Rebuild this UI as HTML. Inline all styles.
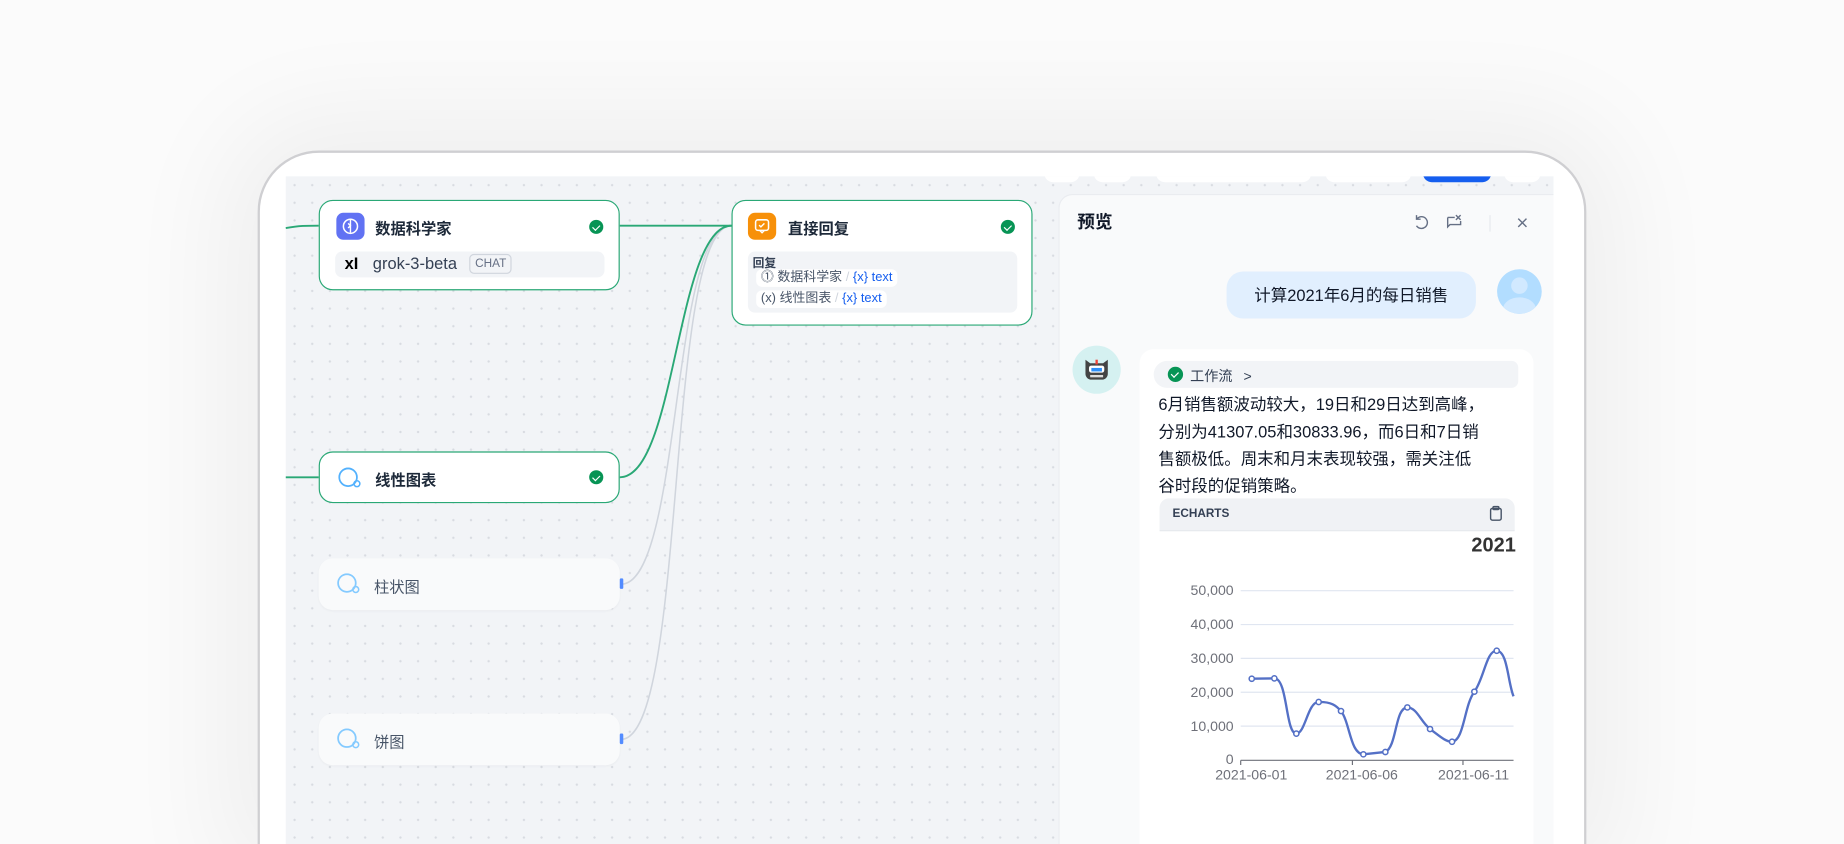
<!DOCTYPE html>
<html><head><meta charset="utf-8"><style>
html,body{margin:0;padding:0;width:1844px;height:844px;overflow:hidden;background:#fbfbfb;}
#s{position:absolute;left:0;top:0;width:1568px;height:718px;overflow:hidden;transform:scale(1.17602,1.1755);transform-origin:0 0;font-family:"Liberation Sans","Noto Sans CJK SC",sans-serif;color:#101828;}
.a{position:absolute;}
.dev{left:219px;top:128px;width:1130px;height:590px;border:2px solid #cfcfd2;border-bottom:none;border-radius:52px 52px 0 0;background:#fff;box-shadow:0 0 90px 30px rgba(0,0,0,0.05);box-sizing:border-box}
.scr{left:243px;top:150px;width:1078px;height:568px;background-color:#f2f4f7;background-image:radial-gradient(circle,#d8dbe1 0.8px,transparent 1.2px);background-size:15px 15px;overflow:hidden;}
.node{position:absolute;background:#fff;border:1.5px solid #2aa876;border-radius:12px;box-sizing:border-box;}
.ttl{position:absolute;font-size:13px;font-weight:bold;color:#1d2939;}
.chk{position:absolute;width:12px;height:12px;border-radius:50%;background:#079455;}
.chk:after{content:"";position:absolute;left:3.5px;top:2.5px;width:3px;height:5px;border:solid #fff;border-width:0 1.5px 1.5px 0;transform:rotate(45deg);}
.ico{position:absolute;width:24px;height:23px;border-radius:6px;}
.pill{position:absolute;background:#fff;border-radius:5px;font-size:11px;color:#475467;height:15px;line-height:15px;padding:0 4px;white-space:nowrap}
.pill b{font-weight:normal;color:#155eef}
.pale{position:absolute;background:#f9fafb;border-radius:12px;box-shadow:0 1px 2px rgba(16,24,40,0.03);}
</style></head><body><div id="s">
<div class="a dev"></div>
<div class="a scr">
 <div class="a" style="left:645px;top:-10px;width:30px;height:15px;background:#fff;border-radius:8px"></div>
 <div class="a" style="left:687px;top:-10px;width:32px;height:15px;background:#fff;border-radius:8px"></div>
 <div class="a" style="left:740px;top:-10px;width:132px;height:15px;background:#fff;border-radius:8px"></div>
 <div class="a" style="left:884px;top:-10px;width:73px;height:15px;background:#fff;border-radius:8px"></div>
 <div class="a" style="left:967px;top:-10px;width:58px;height:15px;background:#155eef;border-radius:8px"></div>
 <div class="a" style="left:1036px;top:-10px;width:31px;height:15px;background:#fff;border-radius:8px"></div>
</div>
<svg class="a" style="left:0;top:0" width="1568" height="718">
 <g fill="none" stroke-width="1.6">
  <path d="M243 194 C255 192 260 192 271 192" stroke="#2aa876"/>
  <path d="M527 192 L622 192" stroke="#2aa876"/>
  <path d="M243 406 L271 406" stroke="#2aa876"/>
  <path d="M528 497 C580 497 570 192 622 192" stroke="#d0d5dd" stroke-width="1.3"/>
  <path d="M528 629 C585 629 565 192 622 192" stroke="#d0d5dd" stroke-width="1.3"/>
  <path d="M527 406 C575 406 575 192 622 192" stroke="#2aa876"/>
 </g>
</svg>
<div class="node" style="left:271px;top:170px;width:256px;height:77px">
 <div class="ico" style="left:14px;top:10px;background:#6172f3"><svg width="24" height="23"><circle cx="12" cy="11.5" r="6" fill="none" stroke="#fff" stroke-width="1.3"/><path d="M12 6v11M10 9l2 2-2 2" stroke="#fff" stroke-width="1.2" fill="none"/></svg></div>
 <div class="ttl" style="left:47px;top:13px">数据科学家</div>
 <div class="chk" style="left:229px;top:16px"></div>
 <div class="a" style="left:13px;top:43px;width:229px;height:22px;background:#f2f4f7;border-radius:6px">
  <div class="a" style="left:8px;top:2px;font-size:14px;font-weight:bold;color:#000">x<span style="font-weight:bold">I</span></div>
  <div class="a" style="left:32px;top:2px;font-size:14px;color:#344054">grok-3-beta</div>
  <div class="a" style="left:114px;top:2px;height:15px;line-height:15px;padding:0 4px;border:1px solid #d0d5dd;border-radius:4px;font-size:10px;color:#667085">CHAT</div>
 </div>
</div>
<div class="node" style="left:622px;top:170px;width:256px;height:107px">
 <div class="ico" style="left:13px;top:10px;background:#f79009"><svg width="24" height="23"><rect x="6.5" y="6" width="11" height="9" rx="2" fill="none" stroke="#fff" stroke-width="1.3"/><path d="M10 15l2 2 2-2" stroke="#fff" fill="none" stroke-width="1.2"/><path d="M9.5 10.5l1.5 1.5 3-3" stroke="#fff" fill="none" stroke-width="1.2"/></svg></div>
 <div class="ttl" style="left:47px;top:13px">直接回复</div>
 <div class="chk" style="left:228px;top:16px"></div>
 <div class="a" style="left:13px;top:43px;width:229px;height:52px;background:#f2f4f7;border-radius:6px">
  <div class="a" style="left:4px;top:1px;font-size:10px;font-weight:bold;color:#344054">回复</div>
  <div class="pill" style="left:7px;top:15px">⓵ 数据科学家 <span style="color:#d0d5dd">/</span> <b>{x} text</b></div>
  <div class="pill" style="left:7px;top:33px">(x) 线性图表 <span style="color:#d0d5dd">/</span> <b>{x} text</b></div>
 </div>
</div>
<div class="node" style="left:271px;top:384px;width:256px;height:44px">
 <svg class="a" style="left:14px;top:11px" width="24" height="22"><circle cx="10" cy="10" r="7.5" fill="none" stroke="#53b1fd" stroke-width="1.5"/><circle cx="17.5" cy="15.5" r="2.5" fill="none" stroke="#53b1fd" stroke-width="1.3"/></svg>
 <div class="ttl" style="left:47px;top:13px">线性图表</div>
 <div class="chk" style="left:229px;top:15px"></div>
</div>
<div class="pale" style="left:271px;top:475px;width:256px;height:44px">
 <svg class="a" style="left:14px;top:11px" width="24" height="22"><circle cx="10" cy="10" r="7.5" fill="none" stroke="#84caff" stroke-width="1.5"/><circle cx="17.5" cy="15.5" r="2.5" fill="none" stroke="#84caff" stroke-width="1.3"/></svg>
 <div class="a" style="left:47px;top:14px;font-size:13px;color:#475467">柱状图</div>
</div>
<div class="a" style="left:527px;top:492px;width:3px;height:9px;background:#528bff;border-radius:1px"></div>
<div class="pale" style="left:271px;top:607px;width:256px;height:44px">
 <svg class="a" style="left:14px;top:11px" width="24" height="22"><circle cx="10" cy="10" r="7.5" fill="none" stroke="#84caff" stroke-width="1.5"/><circle cx="17.5" cy="15.5" r="2.5" fill="none" stroke="#84caff" stroke-width="1.3"/></svg>
 <div class="a" style="left:47px;top:14px;font-size:13px;color:#475467">饼图</div>
</div>
<div class="a" style="left:527px;top:624px;width:3px;height:9px;background:#528bff;border-radius:1px"></div>

<div class="a" style="left:900px;top:165px;width:421px;height:553px;background:#f9fafb;border-left:1px solid #eaecf0;border-top:1px solid #eaecf0;border-radius:12px 0 0 0;box-sizing:border-box;overflow:hidden">
 <div class="a" style="left:15px;top:12px;font-size:15px;font-weight:bold;color:#101828">预览</div>
 <svg class="a" style="left:300px;top:15px" width="100" height="18" fill="none" stroke="#667085" stroke-width="1.2">
  <path d="M4 5a5 5 0 1 1 -0.5 6"/><path d="M3.5 2v3.5h3.5"/>
  <path d="M30 4h6M30 4v8l2-2h9v-3"/><path d="M37 2l4 4M41 2l-4 4"/>
  <path d="M66 2v14" stroke="#eaecf0"/>
  <path d="M90 5l7 7M97 5l-7 7"/>
 </svg>
 <div class="a" style="left:142px;top:65px;width:212px;height:40px;background:#e1effe;border-radius:14px;font-size:14px;line-height:40px;text-align:center;color:#101828">计算2021年6月的每日销售</div>
 <div class="a" style="left:372px;top:63px;width:38px;height:38px;border-radius:50%;background:#b2ddff;overflow:hidden">
  <div class="a" style="left:12px;top:7px;width:14px;height:14px;border-radius:50%;background:#d1e9ff"></div>
  <div class="a" style="left:5px;top:24px;width:28px;height:20px;border-radius:50%;background:#d1e9ff"></div>
 </div>
 <div class="a" style="left:11px;top:128px;width:41px;height:41px;border-radius:50%;background:#d5f1f1">
  <svg class="a" style="left:8px;top:8px" width="25" height="25"><path d="M3 4l4 3h11l4-3v12a5 5 0 0 1-5 5H8a5 5 0 0 1-5-5z" fill="#444"/><rect x="6" y="9" width="13" height="6" rx="2" fill="#fff"/><rect x="8" y="11" width="9" height="3" fill="#2e90fa"/><rect x="11.5" y="4" width="2" height="4" fill="#f04438"/><rect x="7" y="17" width="11" height="2" fill="#ddd"/></svg>
 </div>
 <div class="a" style="left:68px;top:131px;width:335px;height:422px;background:#fff;border-radius:12px 12px 0 0">
  <div class="a" style="left:12px;top:10px;width:310px;height:23px;background:#f2f4f7;border-radius:12px 6px 6px 12px">
   <div class="chk" style="left:12px;top:5px;width:13px;height:13px"></div>
   <div class="a" style="left:31px;top:4px;font-size:12px;color:#344054">工作流 <span style="margin-left:6px">&gt;</span></div>
  </div>
  <div class="a" style="left:16px;top:36px;width:310px;font-size:14px;line-height:23px;color:#101828">6月销售额波动较大，19日和29日达到高峰，<br>分别为41307.05和30833.96，而6日和7日销<br>售额极低。周末和月末表现较强，需关注低<br>谷时段的促销策略。</div>
  <div class="a" style="left:17px;top:127px;width:302px;height:27px;background:#f0f2f5;border-radius:8px 8px 0 0;border-bottom:1px solid #e4e7ec">
   <div class="a" style="left:11px;top:8px;font-size:10px;font-weight:bold;color:#344054">ECHARTS</div>
   <svg class="a" style="left:280px;top:6px" width="12" height="14" fill="none" stroke="#475467" stroke-width="1.2"><rect x="1.5" y="2.5" width="9" height="10" rx="1.5"/><rect x="3.5" y="1" width="5" height="2.5" rx="0.8"/></svg>
  </div>
 </div>
</div>
<svg class="a" style="left:0;top:0" width="1568" height="718" font-family="Liberation Sans, sans-serif">
 <text x="1289" y="469" text-anchor="end" font-size="17" font-weight="bold" fill="#333">2021</text>
 <g stroke="#e0e6f1" stroke-width="1">
  <path d="M1055 502.5H1287M1055 531.3H1287M1055 560.1H1287M1055 588.9H1287M1055 617.7H1287"/>
 </g>
 <path d="M1055 646.8H1287M1055 646.8v4M1150 646.8v4M1244 646.8v4" stroke="#6e7079" stroke-width="1"/>
 <g font-size="12" fill="#6e7079" text-anchor="end">
  <text x="1049" y="506">50,000</text><text x="1049" y="535">40,000</text><text x="1049" y="564">30,000</text><text x="1049" y="593">20,000</text><text x="1049" y="622">10,000</text><text x="1049" y="650">0</text>
 </g>
 <g font-size="12" fill="#6e7079" text-anchor="middle">
  <text x="1064" y="663">2021-06-01</text><text x="1158" y="663">2021-06-06</text><text x="1253" y="663">2021-06-11</text>
 </g>
 <path d="M1064.4 577.4 L1083.6 577.1 C1095 577 1093 624 1102.3 624.1 C1110 624 1112 597 1121.3 597.2 C1132 597 1136 600 1140.3 604.9 C1148 615 1148 641 1159.3 641.7 L1178 639.7 C1188 635 1186 602 1196.7 601.8 C1205 602 1208 614 1216 620.2 C1224 626 1229 631 1234.7 631 C1245 630 1245 600 1253.7 588.4 C1262 577 1264 553 1272.7 553.6 C1282 554 1282 580 1287 592.4" fill="none" stroke="#5470c6" stroke-width="2"/>
 <g fill="#fff" stroke="#5470c6" stroke-width="1.3">
  <circle cx="1064.4" cy="577.4" r="2.2"/><circle cx="1083.6" cy="577.1" r="2.2"/><circle cx="1102.3" cy="624.1" r="2.2"/><circle cx="1121.3" cy="597.2" r="2.2"/><circle cx="1140.3" cy="604.9" r="2.2"/><circle cx="1159.3" cy="641.7" r="2.2"/><circle cx="1178" cy="639.7" r="2.2"/><circle cx="1196.7" cy="601.8" r="2.2"/><circle cx="1216" cy="620.2" r="2.2"/><circle cx="1234.7" cy="631" r="2.2"/><circle cx="1253.7" cy="588.4" r="2.2"/><circle cx="1272.7" cy="553.6" r="2.2"/>
 </g>
</svg>
</div></body></html>
